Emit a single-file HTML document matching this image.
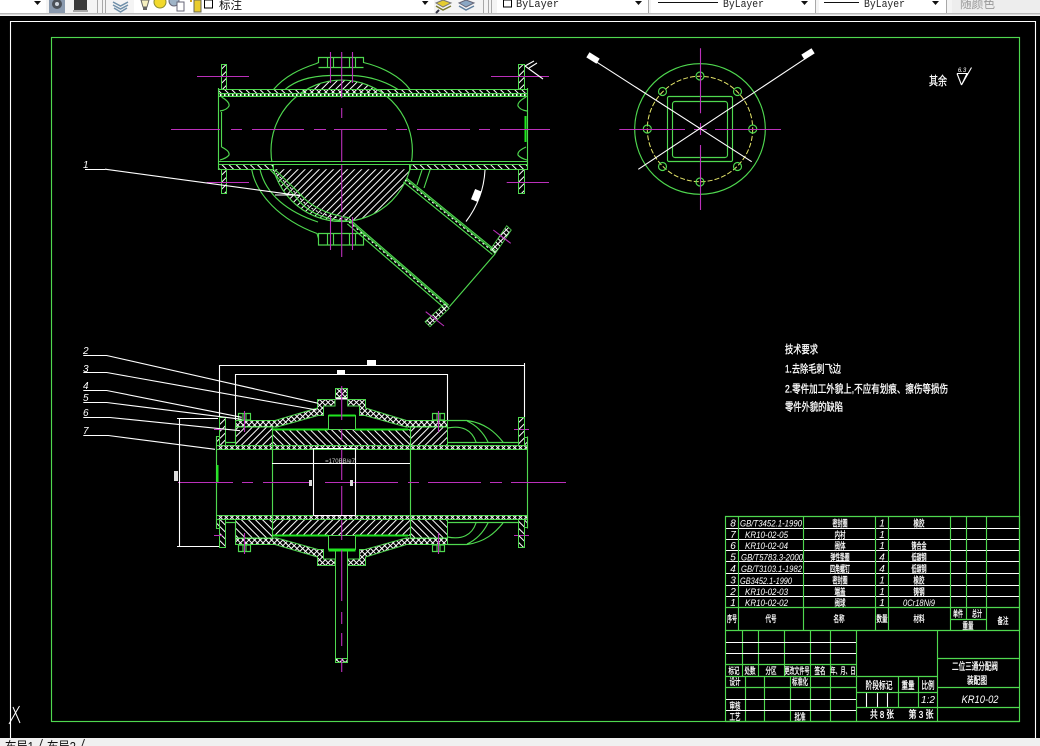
<!DOCTYPE html>
<html><head><meta charset="utf-8"><title>CAD</title>
<style>
html,body{margin:0;padding:0;background:#000;width:1040px;height:746px;overflow:hidden}
svg{display:block;position:absolute;left:0;top:0}
.g{stroke:#4fd84f;stroke-width:1.15;fill:none}
.gb{stroke:#1fe61f;stroke-width:2;fill:none}
.m{stroke:#bb30bb;stroke-width:1.1;fill:none}
.w{stroke:#fff;stroke-width:1.1;fill:none}
.t{fill:#fff;stroke:#fff;stroke-width:.3;font-family:"Liberation Sans","Noto Sans CJK SC",sans-serif;font-size:9px;text-anchor:middle}
.l{text-anchor:start}
.n{fill:#fff;font-family:"Liberation Sans",sans-serif;font-style:italic;font-size:10px}
.tb{font-family:"Liberation Mono",monospace;font-size:11px;fill:#222}
</style></head><body>
<svg width="1040" height="746" viewBox="0 0 1040 746" xmlns="http://www.w3.org/2000/svg">
<defs>
<pattern id="h1" patternUnits="userSpaceOnUse" width="5" height="5" patternTransform="rotate(45)"><rect width="1" height="5" fill="#fff"/></pattern>
<pattern id="h2" patternUnits="userSpaceOnUse" width="5" height="5" patternTransform="rotate(-45)"><rect width="1" height="5" fill="#fff"/></pattern>
<pattern id="x" patternUnits="userSpaceOnUse" width="4" height="4" patternTransform="rotate(45)"><rect width="1" height="4" fill="#fff"/><rect width="4" height="1" fill="#fff"/></pattern>
<pattern id="s" patternUnits="userSpaceOnUse" width="4" height="3"><rect width="1.500" height="3" fill="#fff"/><rect x="1.500" width="2.500" height="3" fill="#164f16"/></pattern>

<g id="half">
 <rect x="216.500" y="445.500" width="311" height="4" fill="url(#x)" stroke="#4fd84f"/>
 <path d="M219.500 417.500H225.500V445.500H219.500ZM216.500 436.500H219.500V445.500H216.500Z" fill="url(#h1)" stroke="#4fd84f"/>
 <path d="M225.500 442.500H235.500V426.500" class="g"/>
 <rect x="235.500" y="426.500" width="37" height="19" fill="url(#h1)" stroke="#4fd84f"/>
 <rect x="272.500" y="429.500" width="138" height="16" fill="url(#h2)" stroke="#4fd84f"/>
 <rect x="410.500" y="426.500" width="37" height="19" fill="url(#h1)" stroke="#4fd84f"/>
 <path d="M235.500 420.500H275L317.500 408V399.500H335V406H323.500V415.500H318L277 427H235.500Z" fill="url(#x)" stroke="#4fd84f"/>
 <path d="M447.500 420.500H406.500L365.500 408V399.500H347.700V406H359.500V415.500H365L406 427H447.500Z" fill="url(#x)" stroke="#4fd84f"/>
 <rect x="328.500" y="415.500" width="27" height="14" fill="#000" stroke="#4fd84f"/>
 <path d="M272 429.500H328M328.500 415.500H355.500M355 429.500H408" class="gb"/>
 <path d="M238.500 413.500H250.500V420H238.500ZM243 413.500V420M246 413.500V420M432.500 413.500H444.500V420H432.500ZM437 413.500V420M440 413.500V420" class="g"/>
 <path d="M244.500 411V432M438.500 411V432M214 429.500H222.500M514 429.500H529" class="m"/>
 <path d="M524.500 417.500H518.500V445.500H524.500ZM524.500 437.500H527.500V445.500H524.500Z" fill="url(#h1)" stroke="#4fd84f"/>
 <path d="M447.500 420.500H467C485 423 495 432 503 442M447.500 428C462 425 472 430 476 442M467 421C478 426 484 434 488 442M447.500 442.500H518.500" class="g"/>
</g>
</defs>

<!-- toolbar -->
<rect x="0" y="0" width="1040" height="16" fill="#f4f4f4"/>
<rect x="0" y="0" width="46" height="13" fill="#fff"/>
<rect x="134" y="0" width="300" height="13" fill="#fff"/>
<rect x="497" y="0" width="151" height="13" fill="#fff"/>
<rect x="651" y="0" width="164" height="13" fill="#fff"/>
<rect x="819" y="0" width="127" height="13" fill="#fff"/>
<rect x="952" y="0" width="88" height="13" fill="#ededed"/>
<rect x="0" y="13" width="1040" height="1" fill="#b8b8b8"/>
<rect x="0" y="14" width="1040" height="1" fill="#d8d8d8"/>
<path d="M34 1H41L37.500 5Z M422 1H428.500L425 5Z M635 1H642L638.500 5Z M801 1H808L804.500 5Z M932 1H939L935.500 5Z" fill="#111"/>
<path d="M97.500 0V13M102.500 0V13M105.500 0V13M483.500 0V13M488.500 0V13M491.500 0V13M648.500 0V13M815.500 0V13M946.500 0V13" stroke="#a8a8a8" fill="none"/>
<rect x="49" y="0" width="16" height="13" fill="#8a9aae"/><circle cx="57" cy="4" r="5" fill="#4a5058"/><circle cx="57" cy="4" r="2" fill="#cfd6de"/>
<rect x="74" y="0" width="13" height="11" fill="#3a3a3a"/><rect x="73" y="10" width="15" height="2" fill="#aaa"/>
<path d="M113 2L120.500 6L128 2M113 5L120.500 9L128 5M114 8L120.500 12L127 8" stroke="#6f8fa9" stroke-width="1.500" fill="none"/>
<path d="M141 0H149L147 7H143Z" fill="#f6f0c0" stroke="#666"/><rect x="143" y="7" width="4" height="3" fill="#666"/>
<circle cx="160" cy="2" r="6" fill="#f2d92c" stroke="#8c8c30"/>
<circle cx="174" cy="1" r="5" fill="#9fb4c7" stroke="#667"/><rect x="177" y="2" width="7" height="9" fill="#fff" stroke="#667"/>
<rect x="190" y="0" width="2" height="2" fill="#d0a020"/><rect x="194" y="0" width="7" height="12" fill="#e9cc2c" stroke="#665"/>
<rect x="204.500" y="0" width="8" height="8" fill="#fff" stroke="#000"/>
<text x="219" y="9" font-family="'Noto Sans CJK SC',sans-serif" font-size="12" fill="#111" textLength="23" lengthAdjust="spacingAndGlyphs">标注</text>
<path d="M436 3L443 0L451 3L443 7Z" fill="#e4cc30" stroke="#777"/><path d="M436 6L443 10L451 6" stroke="#7c7c30" fill="none" stroke-width="1.500"/><path d="M436 13L439 10" stroke="#334" stroke-width="2"/>
<path d="M459 3L466 0L474 3L466 7Z" fill="#8aa7c4" stroke="#667"/><path d="M459 6L466 10L474 6" stroke="#5f7f9f" fill="none" stroke-width="1.500"/>
<rect x="503.500" y="0" width="8" height="7" fill="#fff" stroke="#000"/>
<text x="516" y="7" class="tb" textLength="43" lengthAdjust="spacingAndGlyphs">ByLayer</text>
<path d="M658 2.500H718M824 2.500H859" stroke="#111" fill="none"/>
<text x="723" y="7" class="tb" textLength="41" lengthAdjust="spacingAndGlyphs">ByLayer</text>
<text x="864" y="7" class="tb" textLength="41" lengthAdjust="spacingAndGlyphs">ByLayer</text>
<text x="960" y="8" font-family="'Noto Sans CJK SC',sans-serif" font-size="12" fill="#999" textLength="35" lengthAdjust="spacingAndGlyphs">随颜色</text>

<path d="M10.500 738V21.500H1035.500V738" class="w"/>
<rect x="51.500" y="37.500" width="968" height="684" class="g"/>

<!-- TOP VIEW -->
<g>
 <path d="M273.500 169.300A70.700 70.700 0 0 0 409.900 169.300Z" fill="url(#h1)"/>
 <path d="M297 96.300A70.700 70.700 0 0 1 386.400 96.300Z" fill="url(#h1)"/>
 <circle cx="341.700" cy="150.800" r="70.700" class="g"/>
 <path d="M273.500 89.500C285 76 300 69 316.500 63.500L318.500 62.500V57.500H363.500V62.500C382 67 400 76 410 89.500M318.500 67.500H363.500M327.500 57.500V67.500M333.500 57.500V67.500M349.500 57.500V67.500M355.500 57.500V67.500" class="g"/>
 <path d="M285 89.500C296 80 312 76 330 75.500H352C368 76 385 81 398 89.500" class="g"/>
 <path d="M251.700 169.500C256 194 280 220 317 233.500L318.500 238.500M260 169.500C266 195 288 212 318 222" class="g"/>
 <path d="M318.500 233.500H363.500V245H318.500ZM327.500 233.500V245M333.500 233.500V245M349.500 233.500V245M355.500 233.500V245" class="g"/>
 <path d="M270 169.500L295 196C305 210 320 220 352 221.500" class="g"/>
 <path d="M275 169.500L299 193C310 206 325 214 350 218" class="g"/>
 <path d="M272.500 169.500L297 194.500C307 208 322 217 351 219.700" stroke="#fff" stroke-dasharray="2 3" fill="none"/>
 <rect x="218.500" y="89.500" width="309" height="4" fill="url(#h2)" stroke="#4fd84f"/>
 <rect x="218.500" y="93.500" width="309" height="3" fill="url(#s)" stroke="#4fd84f"/>
 <rect x="218.500" y="161.500" width="309" height="3" fill="#000" stroke="#4fd84f"/>
 <rect x="218.500" y="164.500" width="55" height="5" fill="url(#h2)" stroke="#4fd84f"/>
 <rect x="409.500" y="164.500" width="118" height="5" fill="url(#h2)" stroke="#4fd84f"/>
 <path d="M218.500 88V170M527.500 88V170M221.500 112V147" class="g"/>
 <path d="M525.500 116V142" stroke="#1fe61f" stroke-width="2" fill="none"/>
 <path d="M221.500 97Q230 102 229 106Q227 110 220 111M221.500 147Q230 151 229 155Q227 158 220 160M526 97Q517 102 518 106Q520 110 527 111M526 147Q517 151 518 155Q520 158 527 160" class="g"/>
 <rect x="221.500" y="64.500" width="5" height="25" fill="url(#h1)" stroke="#4fd84f"/>
 <rect x="221.500" y="169.500" width="5" height="24" fill="url(#h1)" stroke="#4fd84f"/>
 <rect x="518.500" y="64.500" width="6" height="25" fill="url(#h1)" stroke="#4fd84f"/>
 <rect x="518.500" y="169.500" width="6" height="24" fill="url(#h1)" stroke="#4fd84f"/>
 <!-- slanted pipe -->
 <path d="M350.600 220.100L448.600 305.100M347.400 223.900L445.400 308.900M349.700 221.200L447.700 306.200" class="g"/>
 <path d="M349 222L447 307" stroke="#fff" stroke-dasharray="2 3" fill="none"/>
 <path d="M406.600 178.100L495.600 250.600M403.400 181.900L492.400 254.400M405.700 179.200L494.700 251.700" class="g"/>
 <path d="M405 180L494 252.500" stroke="#fff" stroke-dasharray="2 3" fill="none"/>
 <path d="M495 254L449.300 306.700" class="g"/>
 <path d="M506.700 225.700L511.300 230L495 254L490.700 249Z" fill="url(#x)" stroke="#4fd84f" stroke-width=".8"/>
 <path d="M425 321.700L430 326.700L449.300 308.300L445 303.300Z" fill="url(#x)" stroke="#4fd84f" stroke-width=".8"/>
 <path d="M422 170L417 185M430 170L424 188" class="g"/>
 <path d="M493.300 230L510.700 243.300M425.700 311.700L444 326" class="m"/>
 <path d="M171 129.500H220M231 129.500H242M252 129.500H304M314 129.500H326M334 129.500H387M396 129.500H407M417 129.500H470M479 129.500H490M500 129.500H550" class="m"/>
 <path d="M197 76.500H249M491 76.500H549M206.700 182.500H249M506.700 182.500H549" class="m"/>
 <path d="M341.700 52V98M341.700 108V118M341.700 130V162M341.700 165V212M341.700 216V257M330.500 52V83M352.500 52V83M330.500 217V250M352.500 217V250" class="m"/>
 <path d="M485 170C484 190 477 207 466 221.500" class="w"/>
 <rect x="473" y="190" width="7" height="11" fill="#fff" transform="rotate(22 476.500 195)"/>
 <path d="M525 66L543 79M525 66L534 61M529 68L537 63" class="w"/>
 <path d="M105 169.200L300 195.700M85 169.500H105M275 195H300" class="w"/>
 <text x="83" y="168" class="n l">1</text>
</g>

<!-- END VIEW -->
<g>
 <circle cx="700" cy="129" r="65.300" class="g"/>
 <circle cx="700" cy="129" r="52.700" stroke="#e6e66a" fill="none" stroke-dasharray="5 2"/>
 <circle cx="700" cy="76" r="4" class="g"/><circle cx="737.500" cy="91.500" r="4" class="g"/><circle cx="752.700" cy="129" r="4" class="g"/><circle cx="737.500" cy="166.500" r="4" class="g"/><circle cx="700" cy="182" r="4" class="g"/><circle cx="662.500" cy="166.500" r="4" class="g"/><circle cx="647.300" cy="129" r="4" class="g"/><circle cx="662.500" cy="91.500" r="4" class="g"/>
 <rect x="667.500" y="96.500" width="65" height="65" rx="1.500" class="g"/>
 <rect x="672.500" y="101.500" width="55" height="56" rx="2.500" class="g"/>
 <path d="M619.300 129.500H685M694 129.500H706.700M715 129.500H781M700.500 48.300V113.300M700.500 123V135M700.500 145V210" class="m"/>
 <path d="M588.300 56.700L751.700 161.700M813.300 53.300L638.300 169.300" class="w"/>
 <rect x="587" y="55" width="12" height="6" fill="#fff" transform="rotate(32 593 58)"/>
 <rect x="802" y="51" width="12" height="6" fill="#fff" transform="rotate(-32 808 54)"/>
</g>

<!-- SECTION VIEW -->
<g>
 <rect x="216.500" y="449.500" width="311" height="66" fill="#000"/>
 <use href="#half"/>
 <use href="#half" transform="matrix(1 0 0 -1 0 965)"/>
 <path d="M216.500 436.500V528.500M527.500 436.500V528.500M272.500 427V537M410.500 427V537" class="g"/>
 <path d="M217.500 465V482" stroke="#1fe61f" stroke-width="2" fill="none"/>
 <rect x="335.500" y="388.500" width="12" height="9" fill="url(#x)" stroke="#4fd84f"/>
 <rect x="335.500" y="397.500" width="12" height="2" fill="#fff"/>
 <rect x="335.500" y="550.500" width="12" height="112" fill="#000" stroke="#4fd84f"/>
 <rect x="335.500" y="658.500" width="12" height="4" fill="url(#x)" stroke="#4fd84f"/>
 <path d="M328.500 550.500H355.500" class="gb"/>
 <path d="M178 482.500H233M242 482.500H253M263 482.500H310M325 482.500H398M408 482.500H419M428 482.500H481M490 482.500H502M511 482.500H566" class="m"/>
 <path d="M341.700 386V420M341.700 429V440M341.700 448V480M341.700 486V516M341.700 520V540M341.700 550V601M341.700 612V624M341.700 633V646M341.700 658V672" class="m"/>
 <path d="M219.500 417V365.500H524.500V363M524.500 365.500V417M235.500 420V374.500H447.500V420" class="w"/>
 <rect x="367" y="360" width="9" height="5" fill="#fff"/><rect x="337" y="370" width="8" height="4" fill="#fff"/>
 <path d="M177 418.500H218M179.500 418.500V546.500M177 546.500H219M272 463.500H410M313.500 448V515.500M355.500 448V515.500M313.500 448.500H355.500M313.500 515.500H355.500" class="w"/>
 <rect x="174" y="471" width="4" height="10" fill="#ddd"/>
 <rect x="309" y="480" width="3" height="6" fill="#ddd"/><rect x="350" y="480" width="3" height="6" fill="#ddd"/>
 <text x="340" y="463" fill="#ccc" font-family="'Liberation Sans',sans-serif" font-size="6" text-anchor="middle">=170BB/e7</text>
 <path d="M83.300 355.500H106.700L318.300 403.300M83.300 372.500H106.700L316.700 410M83.300 390.500H106.700L241.700 417.300M83.300 402.500H106.700L241.700 419.300M83.300 417.500H110L240 430.700M83.300 435.500H108.300L215 449.300" class="w"/>
 <text x="83" y="354" class="n">2</text><text x="83" y="372" class="n">3</text><text x="83" y="389" class="n">4</text><text x="83" y="401" class="n">5</text><text x="83" y="416" class="n">6</text><text x="83" y="434" class="n">7</text>
</g>

<!-- notes -->
<text x="929" y="85" class="t l" style="font-size:12px" textLength="18" lengthAdjust="spacingAndGlyphs">其余</text>
<path d="M957 73.500H967L961.500 85L971.500 67.500M957 73.500L961.500 85" class="w"/>
<text x="962" y="72" class="n" text-anchor="middle" style="font-size:6px">6.3</text>
<text x="785" y="353" class="t l" style="font-size:11px" textLength="33" lengthAdjust="spacingAndGlyphs">技术要求</text>
<text x="785" y="372.500" class="t l" style="font-size:11px" textLength="56" lengthAdjust="spacingAndGlyphs">1.去除毛刺飞边</text>
<text x="785" y="392.500" class="t l" style="font-size:11px" textLength="163" lengthAdjust="spacingAndGlyphs">2.零件加工外貌上,不应有划痕、擦伤等损伤</text>
<text x="785" y="410.500" class="t l" style="font-size:11px" textLength="58" lengthAdjust="spacingAndGlyphs">零件外貌的缺陷</text>

<!-- TABLE -->
<g>
 <path d="M726 528.500H1019M726 539.500H1019M726 550.500H1019M726 561.500H1019M726 573.500H1019M726 585.500H1019M726 596.500H1019" class="w"/>
 <path d="M725.500 516.500H1019.500V630.500H725.500ZM725.500 607.500H1019.500M738.500 516.500V630.500M803.500 516.500V630.500M875.500 516.500V630.500M888.500 516.500V630.500M950.500 516.500V630.500M966.500 516.500V619.500M986.500 516.500V630.500M950.500 619.500H986.500" class="g"/>
 <path d="M725.500 630.500V721.500M725.500 664.500H856.500M725.500 676.500H856.500M725.500 687.500H856.500M725.500 721.500H1019.500M742.500 630.500V676M758.500 630.500V676M784.500 630.500V676M810.500 630.500V721.500M830.500 630.500V721.500M856.500 630.500V721.500M745.500 676V721.500M764.500 676V721.500M790.500 676V721.500" class="g"/>
 <path d="M726 642.500H856M726 653.500H856M726 699.500H856M726 710.500H856M866.500 692.500V707.500M877.500 692.500V707.500M887.500 692.500V707.500" class="w"/>
 <path d="M937.500 630.500V721.500M856.500 676.500H937.500M856.500 692.500H937.500M856.500 707.500H1019.500M898.500 676.500V707.500M918.500 676.500V707.500M937.500 658.500H1019.500M937.500 687.500H1019.500" class="g"/>

 <text x="733" y="526.500" class="n" text-anchor="middle">8</text>
 <text x="733" y="538" class="n" text-anchor="middle">7</text>
 <text x="733" y="549" class="n" text-anchor="middle">6</text>
 <text x="733" y="560.500" class="n" text-anchor="middle">5</text>
 <text x="733" y="572" class="n" text-anchor="middle">4</text>
 <text x="733" y="583.500" class="n" text-anchor="middle">3</text>
 <text x="733" y="595" class="n" text-anchor="middle">2</text>
 <text x="733" y="606" class="n" text-anchor="middle">1</text>

 <text x="740" y="526.500" class="n" style="font-size:9px" textLength="62" lengthAdjust="spacingAndGlyphs">GB/T3452.1-1990</text>
 <text x="745" y="538" class="n" style="font-size:9px" textLength="43" lengthAdjust="spacingAndGlyphs">KR10-02-05</text>
 <text x="745" y="549" class="n" style="font-size:9px" textLength="43" lengthAdjust="spacingAndGlyphs">KR10-02-04</text>
 <text x="741" y="560.500" class="n" style="font-size:9px" textLength="62" lengthAdjust="spacingAndGlyphs">GB/T5783.3-2000</text>
 <text x="741" y="572" class="n" style="font-size:9px" textLength="61" lengthAdjust="spacingAndGlyphs">GB/T3103.1-1982</text>
 <text x="740" y="584" class="n" style="font-size:9px" textLength="52" lengthAdjust="spacingAndGlyphs">GB3452.1-1990</text>
 <text x="745" y="595" class="n" style="font-size:9px" textLength="43" lengthAdjust="spacingAndGlyphs">KR10-02-03</text>
 <text x="745" y="606" class="n" style="font-size:9px" textLength="43" lengthAdjust="spacingAndGlyphs">KR10-02-02</text>

 <text x="840" y="526.500" class="t" textLength="15" lengthAdjust="spacingAndGlyphs">密封圈</text>
 <text x="840" y="538" class="t" textLength="11" lengthAdjust="spacingAndGlyphs">内衬</text>
 <text x="840" y="549" class="t" textLength="11" lengthAdjust="spacingAndGlyphs">阀体</text>
 <text x="840" y="560.500" class="t" textLength="19" lengthAdjust="spacingAndGlyphs">弹性垫圈</text>
 <text x="840" y="572" class="t" textLength="20" lengthAdjust="spacingAndGlyphs">四角螺钉</text>
 <text x="840" y="583.500" class="t" textLength="15" lengthAdjust="spacingAndGlyphs">密封圈</text>
 <text x="840" y="595" class="t" textLength="11" lengthAdjust="spacingAndGlyphs">端盖</text>
 <text x="840" y="606" class="t" textLength="11" lengthAdjust="spacingAndGlyphs">阀球</text>

 <text x="882" y="526.500" class="n" text-anchor="middle">1</text>
 <text x="882" y="538" class="n" text-anchor="middle">1</text>
 <text x="882" y="549" class="n" text-anchor="middle">1</text>
 <text x="882" y="560.500" class="n" text-anchor="middle">4</text>
 <text x="882" y="572" class="n" text-anchor="middle">4</text>
 <text x="882" y="583.500" class="n" text-anchor="middle">1</text>
 <text x="882" y="595" class="n" text-anchor="middle">1</text>
 <text x="882" y="606" class="n" text-anchor="middle">1</text>

 <text x="919" y="526.500" class="t" textLength="11" lengthAdjust="spacingAndGlyphs">橡胶</text>
 <text x="919" y="549" class="t" textLength="15" lengthAdjust="spacingAndGlyphs">铸合金</text>
 <text x="919" y="560.500" class="t" textLength="15" lengthAdjust="spacingAndGlyphs">低碳钢</text>
 <text x="919" y="572" class="t" textLength="15" lengthAdjust="spacingAndGlyphs">低碳钢</text>
 <text x="919" y="583.500" class="t" textLength="11" lengthAdjust="spacingAndGlyphs">橡胶</text>
 <text x="919" y="595" class="t" textLength="11" lengthAdjust="spacingAndGlyphs">铸钢</text>
 <text x="903" y="606" class="n" style="font-size:9px" textLength="32" lengthAdjust="spacingAndGlyphs">0Cr18Ni9</text>

 <text x="732" y="622" class="t" textLength="10" lengthAdjust="spacingAndGlyphs">序号</text>
 <text x="771" y="622" class="t" textLength="11" lengthAdjust="spacingAndGlyphs">代号</text>
 <text x="839" y="622" class="t" textLength="11" lengthAdjust="spacingAndGlyphs">名称</text>
 <text x="882" y="622" class="t" textLength="11" lengthAdjust="spacingAndGlyphs">数量</text>
 <text x="919" y="622" class="t" textLength="11" lengthAdjust="spacingAndGlyphs">材料</text>
 <text x="958" y="617" class="t" textLength="10" lengthAdjust="spacingAndGlyphs">单件</text>
 <text x="977" y="617" class="t" textLength="10" lengthAdjust="spacingAndGlyphs">总计</text>
 <text x="968" y="629" class="t" textLength="11" lengthAdjust="spacingAndGlyphs">重量</text>
 <text x="1003" y="624" class="t" textLength="11" lengthAdjust="spacingAndGlyphs">备注</text>

 <text x="734" y="674" class="t" textLength="11" lengthAdjust="spacingAndGlyphs">标记</text>
 <text x="750" y="674" class="t" textLength="11" lengthAdjust="spacingAndGlyphs">处数</text>
 <text x="771" y="674" class="t" textLength="11" lengthAdjust="spacingAndGlyphs">分区</text>
 <text x="797" y="674" class="t" textLength="25" lengthAdjust="spacingAndGlyphs">更改文件号</text>
 <text x="820" y="674" class="t" textLength="11" lengthAdjust="spacingAndGlyphs">签名</text>
 <text x="843" y="674" class="t" textLength="25" lengthAdjust="spacingAndGlyphs">年、月、日</text>
 <text x="735" y="685" class="t" textLength="11" lengthAdjust="spacingAndGlyphs">设计</text>
 <text x="800" y="685" class="t" textLength="16" lengthAdjust="spacingAndGlyphs">标准化</text>
 <text x="735" y="709" class="t" textLength="11" lengthAdjust="spacingAndGlyphs">审核</text>
 <text x="735" y="720" class="t" textLength="11" lengthAdjust="spacingAndGlyphs">工艺</text>
 <text x="800" y="720" class="t" textLength="11" lengthAdjust="spacingAndGlyphs">批准</text>

 <text x="879" y="689" class="t" style="font-size:10px" textLength="27" lengthAdjust="spacingAndGlyphs">阶段标记</text>
 <text x="908" y="689" class="t" style="font-size:10px" textLength="13" lengthAdjust="spacingAndGlyphs">重量</text>
 <text x="928" y="689" class="t" style="font-size:10px" textLength="13" lengthAdjust="spacingAndGlyphs">比例</text>
 <text x="928" y="703" class="n" text-anchor="middle">1:2</text>
 <text x="882" y="718" class="t" style="font-size:10px" textLength="24" lengthAdjust="spacingAndGlyphs">共 8 张</text>
 <text x="921" y="718" class="t" style="font-size:10px" textLength="25" lengthAdjust="spacingAndGlyphs">第 3 张</text>

 <text x="975" y="670" class="t" style="font-size:10px" textLength="46" lengthAdjust="spacingAndGlyphs">二位三通分配阀</text>
 <text x="977" y="684" class="t" style="font-size:10px" textLength="20" lengthAdjust="spacingAndGlyphs">装配图</text>
 <text x="980" y="703" class="n" text-anchor="middle" style="font-size:11px" textLength="37" lengthAdjust="spacingAndGlyphs">KR10-02</text>
</g>

<path d="M13 707L20 723M19.500 706L9 724" stroke="#fff" fill="none"/>

<rect x="0" y="738" width="1040" height="8" fill="#f0f0f0"/>
<text x="5" y="751" font-family="'Liberation Sans','Noto Sans CJK SC',sans-serif" font-size="13" fill="#111" textLength="29" lengthAdjust="spacingAndGlyphs">布局1</text>
<text x="47" y="751" font-family="'Liberation Sans','Noto Sans CJK SC',sans-serif" font-size="13" fill="#111" textLength="29" lengthAdjust="spacingAndGlyphs">布局2</text>
<path d="M40 746L42.500 739M82 746L84.500 739" stroke="#222" fill="none"/>
</svg>
</body></html>
